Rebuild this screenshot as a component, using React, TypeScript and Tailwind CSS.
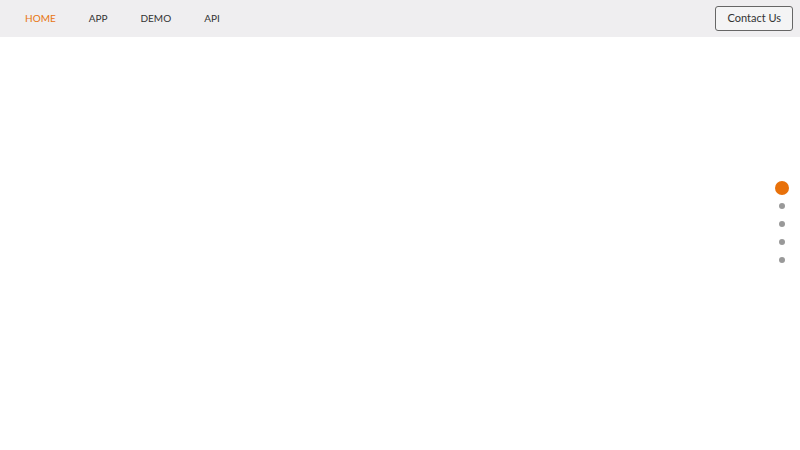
const App = () => {
    const links = ["HOME", "APP", "DEMO", "API"];

    return (
        <div className="relative w-[800px] h-[450px] bg-white overflow-hidden" style={{ fontFamily: "Lato, 'Open Sans', sans-serif" }}>
            {/* Top bar */}
            <nav className="h-[37px] bg-[#efeef0] flex items-center justify-between pl-[25px] pr-[7px]">
                <div className="flex items-center gap-[33px] text-[10px] text-[#333]">
                    {links.map((l, i) => (
                        <a key={l} className={i === 0 ? "text-[#e8750f]" : ""}>{l}</a>
                    ))}
                </div>
                <button className="h-[25px] px-[11px] border border-[#666] rounded-[3px] bg-[#f4f4f5] text-[11px] text-[#333]">
                    Contact Us
                </button>
            </nav>

            {/* Section dots */}
            <div className="absolute right-[11px] top-[181px] flex flex-col items-center">
                <span className="w-[14px] h-[14px] rounded-full bg-[#e8710a]" />
                <div className="mt-[8px] flex flex-col gap-[12px]">
                    <span className="w-[6px] h-[6px] rounded-full bg-[#999]" />
                    <span className="w-[6px] h-[6px] rounded-full bg-[#999]" />
                    <span className="w-[6px] h-[6px] rounded-full bg-[#999]" />
                    <span className="w-[6px] h-[6px] rounded-full bg-[#999]" />
                </div>
            </div>
        </div>
    );
};

export default App;
